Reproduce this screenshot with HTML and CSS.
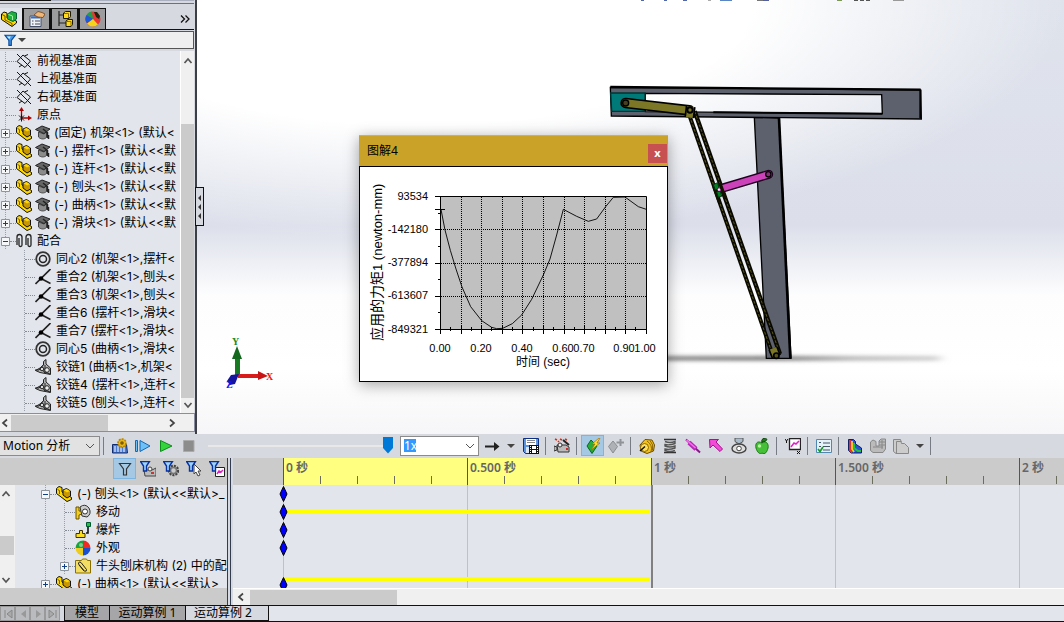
FILE: index.html
```html
<!DOCTYPE html>
<html lang="zh-CN">
<head>
<meta charset="utf-8">
<title>运动算例</title>
<link rel="stylesheet" href="styles.css">
</head>
<body>
<svg class="defs" aria-hidden="true">
  <symbol id="plane" viewBox="0 0 16 16"><path d="M1 8.500 7 2l7.500 6L9 14.500zM1 1l14 14M12 1.500 8.500 3M3 14l3-2" fill="none" stroke="#111" stroke-width="1"/></symbol>
  <symbol id="origin" viewBox="0 0 16 16"><path d="M5.500 11V2m0 9h8" stroke="#b00000" stroke-width="1.300" fill="none"/><path d="M5.500 0 3 4h5zM16 11l-4-2.500v5z" fill="#b00000"/><path d="m3 8.500 5 5m0-5-5 5m2.500-6v7" stroke="#111" stroke-width="1"/></symbol>
  <symbol id="part" viewBox="0 0 16 16"><path d="M.5 2.500 3 .500 6 1.500V6l9.500 5.500v2L11 15.500.5 7.500z" fill="#ffd800" stroke="#111"/><path d="M7 4l3.500-1.500L14.500 5v5L11 12 7 9z" fill="#c89600" stroke="#111"/><path d="m7.500 4.300 3-1.300L14 5l-3 1.500z" fill="#ffd800"/><path d="m1.500 3.500 2 1V8" fill="none" stroke="#7a5b00"/></symbol>
  <symbol id="hat" viewBox="0 0 16 16"><path d="M3.500 7v5c2 2.500 6 2.500 8 .5V7L9 9z" fill="#8b8b8b" stroke="#444"/><path d="M.5 4.500 7 1l8 3L9 8.500z" fill="#666" stroke="#222"/><path d="M8 4 12.500 7.500V13m1-3v4" stroke="#222" stroke-width="1.500" fill="none"/></symbol>
  <symbol id="clips" viewBox="0 0 16 16"><path d="M1 12V4a2.500 2.500 0 0 1 5 0v8a1.500 1.500 0 0 1-3 0V5M10 12V4a2.500 2.500 0 0 1 5 0v8a1.500 1.500 0 0 1-3 0V5" fill="none" stroke="#222" stroke-width="1.300"/></symbol>
  <symbol id="concentric" viewBox="0 0 16 16"><circle cx="8" cy="8" r="6.800" fill="none" stroke="#333" stroke-width="1.800"/><circle cx="8" cy="8" r="3.500" fill="none" stroke="#222" stroke-width="1.500"/></symbol>
  <symbol id="coincident" viewBox="0 0 16 16"><path d="M.5 15 15.500 0M6 9.500l9.500 5" stroke="#222" stroke-width="1.600"/><circle cx="6" cy="9.500" r="2.300" fill="#000"/></symbol>
  <symbol id="hinge" viewBox="0 0 16 16"><path d="M8.500 6V2.500L11 .5V5l4.500 4v6.500L5 13.500.5 11.500 5 9z" fill="#b5b5b5" stroke="#222"/><path d="M0 11h4l5-6m-3 4 4 5m0-8v7l5 2" stroke="#222" fill="none"/><circle cx="12" cy="11" r="2.300" fill="#eee" stroke="#222"/><circle cx="7" cy="10" r="1.800" fill="#ddd" stroke="#222"/></symbol>
  <symbol id="ball" viewBox="0 0 16 16"><circle cx="8" cy="8" r="7.500" fill="#eee"/><path d="M8 8V.5A7.500 7.500 0 0 0 .5 8z" fill="#18a33c"/><path d="M8 8V.5A7.500 7.500 0 0 1 15.500 8z" fill="#ee2b22"/><path d="M8 8h7.500A7.500 7.500 0 0 1 8 15.500z" fill="#1a4fd0"/><path d="M8 8v7.500A7.500 7.500 0 0 1 .5 8z" fill="#eccb22"/><circle cx="6" cy="5" r="2" fill="#fff" opacity=".45"/></symbol>
  <symbol id="assembly" viewBox="0 0 16 16"><path d="M.5 3 3 1l3 1v5l9.500 3v2L11 15.500.5 8.500z" fill="#ffd800" stroke="#111"/><path d="m1 3.500 3 1.500v4l7 3.500v2.500" fill="none" stroke="#6b5000"/><path d="m6.500 3 4-2.500 5 1.500v6L12 10.500 6.500 8z" fill="#1fae3a" stroke="#063"/><path d="m7.500 3.500 4 1.500v4" fill="none" stroke="#a5f0a8"/></symbol>
  <symbol id="props" viewBox="0 0 16 16"><path d="M1 5h11v10.500H1z" fill="#eef2f8" stroke="#44506a"/><path d="M2 5.500h9v2H2z" fill="#3670c8"/><path d="M6 10h5M6 13h5M3 10h1.500M3 13h1.500" stroke="#445"/><path d="M5 4 9 .5l4 1L16 3l-2 3.500L9 6z" fill="#f0b878" stroke="#70401c" stroke-width=".8"/></symbol>
  <symbol id="config" viewBox="0 0 16 16"><path d="M2 0v15M2 4h5M2 12h7" stroke="#222" fill="none" stroke-width="1.200"/><path d="m6.500 2 2-1.500h5v5L12 7.500H6.500zM9 10l2-1.500h4.500v5L14 15.500H9z" fill="#ffd91a" stroke="#1c1800"/><path d="M7 2.500h4.500V7M9.500 10.500H14V15" fill="none" stroke="#8a6b00"/></symbol>
  <symbol id="appearance" viewBox="0 0 16 16"><circle cx="8" cy="8" r="7.500" fill="#e33"/><path d="M8 8 1.500 4A7.500 7.500 0 0 1 7 .500z" fill="#1ca24a"/><path d="M8 8 1.500 4A7.500 7.500 0 0 0 2 12.500z" fill="#1a5adb"/><path d="M8 8 2 12.500a7.500 7.500 0 0 0 11 1z" fill="#f5d51b"/><path d="M9 1h3l3 4-1 3-3-2z" fill="#221"/></symbol>
  <symbol id="funnel" viewBox="0 0 16 16"><path d="M1 1.500h13L9 8v6H6V8z" fill="#4898e8" stroke="#0a4c9c" stroke-width="1.400"/><path d="M3.500 3h5L6.500 6z" fill="#c9ecff"/></symbol>
  <symbol id="bluefunnel" viewBox="0 0 16 16"><path d="M.5.5h9L6.500 5v5h-3V5z" fill="#9fd3ff" stroke="#0832a0" stroke-width="1.400"/></symbol>
  <symbol id="expand" viewBox="0 0 9 9"><path d="M.5.5h8v8h-8z" fill="#f6f7f9" stroke="#8d949c"/><path d="M2 4.500h5M4.500 2v5" stroke="#123f86"/></symbol>
  <symbol id="collapse" viewBox="0 0 9 9"><path d="M.5.5h8v8h-8z" fill="#f6f7f9" stroke="#8d949c"/><path d="M2 4.500h5" stroke="#123f86"/></symbol>
  <symbol id="up" viewBox="0 0 10 10"><path d="m1.500 7 3.500-4 3.500 4" fill="none" stroke="#555" stroke-width="1.700"/></symbol>
  <symbol id="down" viewBox="0 0 10 10"><path d="m1.500 3 3.500 4 3.500-4" fill="none" stroke="#555" stroke-width="1.700"/></symbol>
  <symbol id="left" viewBox="0 0 10 10"><path d="M7 1.500 3 5l4 3.500" fill="none" stroke="#444" stroke-width="1.700"/></symbol>
  <symbol id="right" viewBox="0 0 10 10"><path d="m3 1.500 4 3.500-4 3.500" fill="none" stroke="#444" stroke-width="1.700"/></symbol>
  <symbol id="chev" viewBox="0 0 10 10"><path d="m1 3 4 4 4-4" fill="none" stroke="#555" stroke-width="1"/></symbol>
  <symbol id="caret" viewBox="0 0 8 8"><path d="M0 2h8L4 6z" fill="#444"/></symbol>
</svg>

<main class="workspace">
  <aside class="sidebar">
    <div class="strip"></div>
    <div class="modes">
      <button class="mode mode-on" aria-label="设计树"><svg class="ic"><use href="#assembly"/></svg></button>
      <button class="mode" aria-label="属性"><svg class="ic"><use href="#props"/></svg></button>
      <button class="mode" aria-label="配置"><svg class="ic"><use href="#config"/></svg></button>
      <button class="mode" aria-label="外观"><svg class="ic"><use href="#appearance"/></svg></button>
      <button class="more" aria-label="更多"><svg class="ic-s" viewBox="0 0 10 10"><path d="m1 1.500 3.500 3.500L1 8.500m4.500-7L9 5 5.500 8.500" fill="none" stroke="#111" stroke-width="1.300"/></svg></button>
    </div>
    <button class="filter" aria-label="过滤"><svg class="ic-m"><use href="#funnel"/></svg><svg class="ic-t"><use href="#caret"/></svg></button>
    <div class="treebox">
      <ul class="tree">
        <li class="row lead"><i class="dots"></i><svg class="ic"><use href="#plane"/></svg><span class="name">前视基准面</span></li>
        <li class="row lead"><i class="dots"></i><svg class="ic"><use href="#plane"/></svg><span class="name">上视基准面</span></li>
        <li class="row lead"><i class="dots"></i><svg class="ic"><use href="#plane"/></svg><span class="name">右视基准面</span></li>
        <li class="row lead"><i class="dots"></i><svg class="ic"><use href="#origin"/></svg><span class="name">原点</span></li>
        <li class="row"><svg class="ex"><use href="#expand"/></svg><i class="dots"></i><svg class="ic"><use href="#part"/></svg><svg class="ic hat"><use href="#hat"/></svg><span class="name near">(固定) 机架&lt;1&gt; (默认&lt;</span></li>
        <li class="row"><svg class="ex"><use href="#expand"/></svg><i class="dots"></i><svg class="ic"><use href="#part"/></svg><svg class="ic hat"><use href="#hat"/></svg><span class="name near">(-) 摆杆&lt;1&gt; (默认&lt;&lt;默</span></li>
        <li class="row"><svg class="ex"><use href="#expand"/></svg><i class="dots"></i><svg class="ic"><use href="#part"/></svg><svg class="ic hat"><use href="#hat"/></svg><span class="name near">(-) 连杆&lt;1&gt; (默认&lt;&lt;默</span></li>
        <li class="row"><svg class="ex"><use href="#expand"/></svg><i class="dots"></i><svg class="ic"><use href="#part"/></svg><svg class="ic hat"><use href="#hat"/></svg><span class="name near">(-) 刨头&lt;1&gt; (默认&lt;&lt;默</span></li>
        <li class="row"><svg class="ex"><use href="#expand"/></svg><i class="dots"></i><svg class="ic"><use href="#part"/></svg><svg class="ic hat"><use href="#hat"/></svg><span class="name near">(-) 曲柄&lt;1&gt; (默认&lt;&lt;默</span></li>
        <li class="row"><svg class="ex"><use href="#expand"/></svg><i class="dots"></i><svg class="ic"><use href="#part"/></svg><svg class="ic hat"><use href="#hat"/></svg><span class="name near">(-) 滑块&lt;1&gt; (默认&lt;&lt;默</span></li>
        <li class="row"><svg class="ex"><use href="#collapse"/></svg><i class="dots"></i><svg class="ic"><use href="#clips"/></svg><span class="name">配合</span></li>
        <li class="row mate"><i class="dots"></i><svg class="ic"><use href="#concentric"/></svg><span class="name">同心2 (机架&lt;1&gt;,摆杆&lt;</span></li>
        <li class="row mate"><i class="dots"></i><svg class="ic"><use href="#coincident"/></svg><span class="name">重合2 (机架&lt;1&gt;,刨头&lt;</span></li>
        <li class="row mate"><i class="dots"></i><svg class="ic"><use href="#coincident"/></svg><span class="name">重合3 (机架&lt;1&gt;,刨头&lt;</span></li>
        <li class="row mate"><i class="dots"></i><svg class="ic"><use href="#coincident"/></svg><span class="name">重合6 (摆杆&lt;1&gt;,滑块&lt;</span></li>
        <li class="row mate"><i class="dots"></i><svg class="ic"><use href="#coincident"/></svg><span class="name">重合7 (摆杆&lt;1&gt;,滑块&lt;</span></li>
        <li class="row mate"><i class="dots"></i><svg class="ic"><use href="#concentric"/></svg><span class="name">同心5 (曲柄&lt;1&gt;,滑块&lt;</span></li>
        <li class="row mate"><i class="dots"></i><svg class="ic"><use href="#hinge"/></svg><span class="name">铰链1 (曲柄&lt;1&gt;,机架&lt;</span></li>
        <li class="row mate"><i class="dots"></i><svg class="ic"><use href="#hinge"/></svg><span class="name">铰链4 (摆杆&lt;1&gt;,连杆&lt;</span></li>
        <li class="row mate"><i class="dots"></i><svg class="ic"><use href="#hinge"/></svg><span class="name">铰链5 (刨头&lt;1&gt;,连杆&lt;</span></li>
      </ul>
      <div class="vscroll">
        <svg class="ic-s"><use href="#up"/></svg>
        <div class="vthumb"></div>
        <svg class="ic-s"><use href="#down"/></svg>
      </div>
    </div>
    <div class="hscroll side-h">
      <svg class="ic-s"><use href="#left"/></svg><div class="hthumb"></div><svg class="ic-s"><use href="#right"/></svg>
    </div>
  </aside>

  <section class="viewport">
    <svg class="scene" role="img" aria-label="牛头刨床机构模型">
      <defs>
        <linearGradient id="fade"><stop offset="0" stop-color="#555"/><stop offset=".45" stop-color="#444"/><stop offset=".7" stop-color="#999"/><stop offset="1" stop-color="#bbb"/></linearGradient>
        <filter id="soft" filterUnits="userSpaceOnUse" x="100" y="800" width="1000" height="130"><feGaussianBlur stdDeviation="16 6"/></filter>
      </defs>
      <g>
        <path d="M444 0h3v1h-3zM467 0h3v1h-3zM486 0h4v1h-4z" fill="#5368a8"/>
        <path d="M511 0h3v1h-3z" fill="#aaa"/><path d="M523 0h12v1h-12z" fill="#5b86c4"/>
        <path d="M560 0h6v1h-6z" fill="#777"/><path d="M566 0h6v1h-6z" fill="#56609a"/>
        <path d="M640 0h5v1h-5z" fill="#7a9a55"/><path d="M657 0h4v1h-4zM663 0h4v1h-4zM669 0h4v1h-4z" fill="#555"/><path d="M696 0h11v1h-11z" fill="#999"/>
      </g>
      <g transform="translate(403 70) scale(.33333)">
        <path d="M150 860H1020V870H150z" fill="url(#fade)" filter="url(#soft)"/>
        <path d="M463 142 537 144 573 865H499z" fill="#5d616e" stroke="#000" stroke-width="4"/>
        <path d="M537 144 571 865" stroke="#000" stroke-width="8"/>
        <path fill-rule="evenodd" d="M31 52 962 60 964 147 34 138zM136 70V125L847 131 845 74z" fill="#5d616e" stroke="#000" stroke-width="4"/>
        <path d="M31 51 962 59" stroke="#000" stroke-width="7"/><path d="M340 127 847 131M961 60v85" stroke="#000" stroke-width="6"/>
        <path d="M32 69H135V124H35z" fill="#007a78" stroke="#033" stroke-width="4"/>
        <path d="M77 99 268 121" stroke="#000" stroke-width="32" stroke-linecap="round"/>
        <path d="M77 99 268 121" stroke="#7b7726" stroke-width="22" stroke-linecap="round"/>
        <path d="M264 124 517 852" stroke="#080800" stroke-width="12"/>
        <path d="M284 124 540 852" stroke="#080800" stroke-width="13"/>
        <path d="M264 124 517 852M284 124 540 852" stroke="#57551a" stroke-width="3" stroke-dasharray="9 5"/>
        <path d="M272 110 268 143M519 835 529 860" stroke="#000" stroke-width="30"/>
        <path d="M272 110 268 143M519 835 529 860" stroke="#7b7726" stroke-width="20"/>
        <circle cx="77" cy="99" r="9" fill="#444020" stroke="#000" stroke-width="4"/>
        <circle cx="270" cy="120" r="8" fill="#7b7726" stroke="#000" stroke-width="6"/>
        <circle cx="529" cy="857" r="8" fill="#55511a" stroke="#000" stroke-width="5"/>
        <path d="M362 356 506 313" stroke="#200020" stroke-width="27" stroke-linecap="round"/>
        <path d="M362 356 506 313" stroke="#cb42b9" stroke-width="19" stroke-linecap="round"/>
        <path d="M342 350 358 396M359 338 376 385" stroke="#111100" stroke-width="10"/>
        <path d="M340 344 353 338 357 355 346 360zM350 366 361 363 365 379 355 382z" fill="#008020" stroke="#031" stroke-width="3"/>
        <circle cx="505" cy="313" r="8" fill="#84317a" stroke="#000" stroke-width="4"/>
        <circle cx="357" cy="359" r="4" fill="#fff" stroke="#a0a"/>
      </g>
      <g>
        <path d="M38 376V355h5v21z" fill="#177a22"/><path d="M40 346 35 359h10z" fill="#13681d"/><path d="M41 374h22v4H41z" fill="#d81c1c"/><path d="m71 376-10-5v9z" fill="#c81414"/><path d="m30 381 4-6 8-1-4 10-5 1z" fill="#1414a0"/>
        <text class="axis" x="35" y="345" fill="#1a8a1a">Y</text><text class="axis" x="69" y="380" fill="#f01010">X</text><text class="axis" x="29" y="388" fill="#1212ff">Z</text>
      </g>
    </svg>
    <button class="handle" aria-label="折叠面板"><svg class="arrows" viewBox="0 0 5 24"><path d="M4 0v6L1 3zM4 9v6L1 12zM4 18v6L1 21z" fill="#333"/></svg></button>
    <section class="dialog" aria-label="图解4">
      <header class="dialog-head"><h2 class="dialog-title">图解4</h2><button class="close" aria-label="关闭">x</button></header>
      <svg class="chart" viewBox="0 0 307 214">
        <path d="M80.500 29.500h206v133h-206z" fill="#c0c0c0" stroke="#000"/>
        <path d="M101.500 30v132M121.500 30v132M142.500 30v132M162.500 30v132M183.500 30v132M204.500 30v132M224.500 30v132M245.500 30v132M265.500 30v132M81 62.500h205M81 96.500h205M81 129.500h205" stroke="#000" stroke-dasharray="1 1" fill="none"/>
        <path d="M75 29.500h6M75 42.500h10M75 62.500h6M75 96.500h6M75 129.500h6M75 162.500h6M78 46.500h3M78 79.500h3M78 112.500h3M78 145.500h3M80.500 163v4M101.500 159v8M121.500 159v8M142.500 159v8M162.500 159v8M183.500 159v8M204.500 159v8M224.500 159v8M245.500 159v8M265.500 159v8M286.500 159v8M90.500 160v4M111.500 160v4M131.500 160v4M152.500 160v4M173.500 160v4M193.500 160v4M214.500 160v4M235.500 160v4M255.500 160v4M275.500 160v4" stroke="#000"/>
        <g transform="translate(-10 -42) scale(.33333)"><path d="M273 253 285 315 301 376 318 432 336 486 362 545 395 587 425 607 440 611 458 610 487 596 515 570 545 523 580 450 600 402 620 330 640 253 680 274 715 289 740 282 767 245 790 217 825 216 865 245 889 253" fill="none" stroke="#000" stroke-width="2.700"/></g>
        <g class="num end"><text x="68" y="33">93534</text><text x="68" y="66">-142180</text><text x="68" y="99">-377894</text><text x="68" y="132">-613607</text><text x="68" y="166">-849321</text></g>
        <g class="num mid"><text x="80" y="185">0.00</text><text x="121" y="185">0.20</text><text x="162" y="185">0.40</text><text x="203" y="185">0.60</text><text x="224" y="185">0.70</text><text x="264" y="185">0.90</text><text x="285" y="185">1.00</text></g>
        <text class="xlabel mid" x="183" y="199">时间 (sec)</text>
        <text class="ylabel" transform="translate(22 174) rotate(-90)"><tspan class="big">应用的力矩</tspan>1 (newton-mm)</text>
      </svg>
    </section>
  </section>
</main>

<section class="motion">
  <div class="toolbar">
    <label class="combo study"><select class="pick" aria-label="算例类型"><option>Motion 分析</option></select><svg class="ic-c"><use href="#chev"/></svg></label>
    <i class="sep"></i>
    <button class="tool" aria-label="计算"><svg class="ic" viewBox="0 0 16 16"><path d="M.5 6.500h14l1 8.500H.5z" fill="#4a7ad0" stroke="#102c70"/><path d="M2 9h11M2 11h11M2 13h11" stroke="#fff" stroke-dasharray="2 1"/><circle cx="10" cy="5" r="4" fill="#e8b818" stroke="#b88400" stroke-width="1.600" stroke-dasharray="2 1"/><circle cx="10" cy="5" r="1.800" fill="#7c5a00"/></svg></button>
    <button class="tool" aria-label="从头播放"><svg class="ic" viewBox="0 0 16 16"><path d="M.5 2.500h2v11h-2zM5 2.500v11L15 8z" fill="#6ec0f5" stroke="#1268b8"/></svg></button>
    <button class="tool" aria-label="播放"><svg class="ic" viewBox="0 0 16 16"><path d="M2.500 2.500v11L14 8z" fill="#34d43c" stroke="#0c8c18"/></svg></button>
    <button class="tool" aria-label="停止"><svg class="ic" viewBox="0 0 16 16"><path d="M2.500 2.500h10.500v11H2.500z" fill="#8c8c8c" stroke="#aaa"/></svg></button>
    <input class="time" type="range" min="0" max="100" value="100" aria-label="时间">
    <div class="combo speed"><input class="rate" value="1x" aria-label="播放速度"><svg class="ic-c"><use href="#chev"/></svg></div>
    <button class="tool" aria-label="播放模式"><svg class="ic" viewBox="0 0 16 16"><path d="M1 7.500h9V4l5.500 4.500L10 13V9.500H1z" fill="#222"/></svg></button>
    <button class="tool tool-n" aria-label="播放模式菜单"><svg class="ic-t"><use href="#caret"/></svg></button>
    <button class="tool save" aria-label="保存动画"><svg class="ic" viewBox="0 0 16 16"><path d="M.5.5h15v15h-13l-2-2z" fill="#5c94e0" stroke="#0c2f80"/><path d="M3 1h10v6H3z" fill="#fff"/><path d="M4 2.500h8M4 4.500h8" stroke="#888"/><path d="M3 9h4v6H3z" fill="#dde6f5"/><path d="M6 7h10v9H6z" fill="#111"/><path d="M9 8h4v3H9zM9 12h4v3H9z" fill="#fff"/><path d="M7.500 8v8M14.500 8v8" stroke="#fff" stroke-dasharray="1 1"/></svg></button>
    <i class="sep"></i>
    <button class="tool" aria-label="动画向导"><svg class="ic" viewBox="0 0 16 16"><path d="m1 1 2 1M6 1l2 1m3-1 2 1M4 3l1 1" stroke="#e02a10" stroke-width="1.600"/><path d="m9 2 6 5" stroke="#222" stroke-width="2"/><path d="M3 7h9l3 2v5H4zM0 8l3 1v3l-3 1z" fill="#bbb" stroke="#333"/><circle cx="6" cy="7" r="2" fill="#eee" stroke="#333"/><path d="M12 10h2v2h-2z" fill="#d22"/></svg></button>
    <i class="sep"></i>
    <button class="tool tool-on" aria-label="自动键码" aria-pressed="true"><svg class="ic" viewBox="0 0 16 16"><path d="m6 2 6 6-5 7.500L2 8z" fill="#26ae3a" stroke="#0a6418"/><path d="M14 0 7 6h3L6 12l9-7h-3l3-5z" fill="#ffe02a" stroke="#a86a00" stroke-width=".7"/></svg></button>
    <button class="tool" aria-label="添加键码"><svg class="ic" viewBox="0 0 16 16"><path d="m5 3 4.500 5.500L5 15 .5 8.500z" fill="#aeb1b5" stroke="#8a8d92"/><path d="M8.500 4.500H16M12.500 1v7" stroke="#909398" stroke-width="2"/></svg></button>
    <i class="sep"></i>
    <button class="tool" aria-label="马达"><svg class="ic" viewBox="0 0 16 16"><path d="M1 7 6 1.500l7 .5 2.500 5-1 6L8 15.500 2 13z" fill="#f5c21c" stroke="#6a4c00"/><path d="M8 3q6 4 4 11M11 2.500q4 4 2.500 10" stroke="#8c6500" fill="none"/><circle cx="5.500" cy="9.500" r="4" fill="#ffdf5a" stroke="#8a6600"/><path d="m1 13 5-4.500" stroke="#111" stroke-width="1.500"/></svg></button>
    <button class="tool" aria-label="弹簧"><svg class="ic" viewBox="0 0 16 16"><path d="M2 1.500h12M2 14.500h12" stroke="#333" stroke-width="1.500"/><path d="M3 3.500q5 2 10 0v2q-5 2-10 1v1.500q5 2 10 0v2q-5 2-10 1v1.500q5 2 10 0" fill="none" stroke="#555" stroke-width="1.400"/></svg></button>
    <button class="tool" aria-label="阻尼"><svg class="ic" viewBox="0 0 16 16"><path d="m1 1.500 14 13" stroke="#8b178b" stroke-width="2"/><path d="m4 4.500 7 6.500" stroke="#b32bb3" stroke-width="4.500"/><path d="m1.500 2 9 8" stroke="#f76df0" stroke-width="1.600"/></svg></button>
    <button class="tool" aria-label="力"><svg class="ic" viewBox="0 0 16 16"><path d="M1.500 1.500h9L8 4l6.500 7-2.500 2.500L5 7 2 10z" fill="#f34ad8" stroke="#a0148c"/></svg></button>
    <button class="tool" aria-label="接触"><svg class="ic" viewBox="0 0 16 16"><path d="M4 0h8v3.500L8 6 4 3.500z" fill="#abc" stroke="#555"/><ellipse cx="8" cy="10.500" rx="7" ry="4.500" fill="#ddd" stroke="#444" stroke-width="1.400"/><circle cx="8" cy="10.500" r="2.300" fill="#fff" stroke="#444"/></svg></button>
    <button class="tool" aria-label="引力"><svg class="ic" viewBox="0 0 16 16"><path d="M8 5C3 2 1 6 2 10s4 7 6 5c3 2 5-1 6-5s-2-8-6-5z" fill="#46c038" stroke="#1c7a18"/><path d="M8 5Q7 2 9 .5q3-1 4 1Q12 4 8 4" fill="#227a1c" stroke="#124a10"/><circle cx="5.500" cy="8" r="1.700" fill="#baf5a4"/></svg></button>
    <i class="sep"></i>
    <button class="tool" aria-label="结果和图解"><svg class="ic" viewBox="0 0 16 16"><path d="M4.500.5h11v11h-11z" fill="#fff" stroke="#222" stroke-width="1.300"/><path d="m6 9 3-4 2 1 3-3" stroke="#e020c8" stroke-width="1.500" fill="none"/><path d="m0 1 1.500 2L3 1M1.500 3v2M12 13l3 3m0-3-3 3" stroke="#111" fill="none"/></svg></button>
    <i class="sep"></i>
    <button class="tool" aria-label="属性"><svg class="ic" viewBox="0 0 16 16"><path d="M.5 1.500h15v13H.5z" fill="#e5f1f9" stroke="#5088b0"/><path d="M7 5h7M7 8.500h7M7 12h7M3 4.500h2M3 8.500h2" stroke="#456" stroke-width="1.200"/><path d="m2 11 2 2.500L7 9" stroke="#1a9c2a" stroke-width="1.800" fill="none"/></svg></button>
    <i class="sep"></i>
    <button class="tool" aria-label="模拟"><svg class="ic" viewBox="0 0 16 16"><path d="M1.500 1.500h5l2 2V6l6 4v5H4l-2.500-2.500z" fill="#2a52e0" stroke="#102060"/><path d="M3 2v10.500l2 2" stroke="#f03020" stroke-width="1.800" fill="none"/><path d="M5 3v8l2 3" stroke="#ffd21a" stroke-width="1.800" fill="none"/><path d="M7 5v5l4 3h3" stroke="#22c33a" stroke-width="2" fill="none"/></svg></button>
    <button class="tool" aria-label="网格"><svg class="ic" viewBox="0 0 16 16"><path d="M.5 4 3 2l3 1.500V8h3V3l2-2h4.500v10L13 14.500H3l-2.500-2z" fill="#bbb" stroke="#888"/><path d="M9 4h6M9 7h6M12 2v9M3 9h10" stroke="#888"/></svg></button>
    <button class="tool" aria-label="零件"><svg class="ic" viewBox="0 0 16 16"><path d="M.5 1.500h7l1 4h3l4 4v6H3l-2.500-2zM3.500 3.500v12M3.500 3.500h5" fill="#ccc" stroke="#888"/></svg></button>
    <button class="tool tool-n" aria-label="更多选项"><svg class="ic-t"><use href="#caret"/></svg></button>
    <i class="sep"></i>
  </div>

  <div class="panes">
    <div class="left">
      <div class="filters">
        <button class="tool tool-on" aria-label="无过滤"><svg class="ic" viewBox="0 0 16 16"><path d="M2.500 2.500h11L9.500 8v6h-3V8z" fill="none" stroke="#333" stroke-width="1.200"/></svg></button>
        <button class="tool" aria-label="过滤动画"><svg class="ic" viewBox="0 0 16 16"><path d="M4 9h8l4-2v8H5z" fill="#bbb" stroke="#444"/><circle cx="10" cy="8" r="2" fill="#eee" stroke="#444"/><path d="M11 11h3v2h-3z" fill="#c33"/><use href="#bluefunnel"/></svg></button>
        <button class="tool" aria-label="过滤驱动"><svg class="ic" viewBox="0 0 16 16"><circle cx="10.500" cy="9.500" r="4.500" fill="none" stroke="#444" stroke-width="2.500" stroke-dasharray="2 1"/><circle cx="10.500" cy="9.500" r="3" fill="none" stroke="#777" stroke-width="1.500"/><use href="#bluefunnel"/></svg></button>
        <button class="tool" aria-label="过滤选定"><svg class="ic" viewBox="0 0 16 16"><path d="m8 3 7 7h-3l2 4-2 1-2-4-2 2z" fill="#fff" stroke="#444"/><use href="#bluefunnel"/></svg></button>
        <button class="tool" aria-label="过滤结果"><svg class="ic" viewBox="0 0 16 16"><path d="M6.500 6.500h9v9h-9z" fill="#fff" stroke="#222"/><path d="m8 13 2-3 2 1 2-2" stroke="#e020c8" stroke-width="1.500" fill="none"/><use href="#bluefunnel"/></svg></button>
      </div>
      <div class="treebox2">
        <div class="vscroll2"><svg class="ic-s"><use href="#up"/></svg><div class="vthumb2"></div><svg class="ic-s"><use href="#down"/></svg></div>
        <ul class="tree tree2">
          <li class="row"><svg class="ex"><use href="#collapse"/></svg><i class="dots"></i><svg class="ic"><use href="#part"/></svg><span class="name">(-) 刨头&lt;1&gt; (默认&lt;&lt;默认&gt;_</span></li>
          <li class="row sub"><i class="dots"></i><svg class="ic" viewBox="0 0 16 16"><path d="M1 3h3v4h3v3l-3 1v4H1z" fill="#f4cf1a" stroke="#6a5200"/><path d="M5 3q5-4 9 1 3 6-2 9l-5-1z" fill="#ccc" stroke="#333"/><circle cx="10" cy="7.500" r="2.500" fill="#fff" stroke="#333"/></svg><span class="name">移动</span></li>
          <li class="row sub"><i class="dots"></i><svg class="ic" viewBox="0 0 16 16"><path d="M1 11.500h3.500v-3h3v3h2.500v4H1z" fill="#f8dc20" stroke="#3c3000"/><path d="M11 11h2V4" stroke="#111" fill="none" stroke-width="1.600"/><path d="M11.500.5h4v4h-4z" fill="#1cc82c" stroke="#053"/></svg><span class="name">爆炸</span></li>
          <li class="row sub"><i class="dots"></i><svg class="ic"><use href="#ball"/></svg><span class="name">外观</span></li>
          <li class="row sub"><svg class="ex"><use href="#expand"/></svg><i class="dots"></i><svg class="ic" viewBox="0 0 16 16"><path d="M.5 2.500h6l1-1.500h4l1 1.500h3v12.500H.5z" fill="#f3de63" stroke="#8a7000"/><path d="m4 7 5 6q3 1 2.500-1.500L6 4.500Q3.500 3 3.500 6L8.500 12" stroke="#222" fill="none"/></svg><span class="name">牛头刨床机构 (2) 中的配</span></li>
          <li class="row"><svg class="ex"><use href="#expand"/></svg><i class="dots"></i><svg class="ic"><use href="#part"/></svg><span class="name">(-) 曲柄&lt;1&gt; (默认&lt;&lt;默认&gt;</span></li>
        </ul>
      </div>
      <div class="leftfoot"></div>
    </div>
    <div class="gantt">
      <div class="ruler">
        <div class="lead-in"></div>
        <div class="span hot">0 秒</div><div class="span hot">0.500 秒</div><div class="span">1 秒</div><div class="span">1.500 秒</div><div class="span">2 秒</div>
      </div>
      <div class="tracks">
        <div class="grid"><div class="lead-in2"></div><div class="cell"></div><div class="cell"></div><div class="cell end-line"></div><div class="cell"></div><div class="cell"></div></div>
        <div class="lane"><svg class="key" viewBox="0 0 9 16"><path d="M4.500.5 8 8l-3.500 7.500L1 8z" fill="#00f" stroke="#000"/></svg></div>
        <div class="lane"><div class="bar"></div><svg class="key" viewBox="0 0 9 16"><path d="M4.500.5 8 8l-3.500 7.500L1 8z" fill="#00f" stroke="#000"/></svg></div>
        <div class="lane"><svg class="key" viewBox="0 0 9 16"><path d="M4.500.5 8 8l-3.500 7.500L1 8z" fill="#00f" stroke="#000"/></svg></div>
        <div class="lane"><svg class="key" viewBox="0 0 9 16"><path d="M4.500.5 8 8l-3.500 7.500L1 8z" fill="#00f" stroke="#000"/></svg></div>
        <div class="lane"></div>
        <div class="lane lane-cut"><div class="bar"></div><svg class="key" viewBox="0 0 9 16"><path d="M4.500.5 8 8l-3.500 7.500L1 8z" fill="#00f" stroke="#000"/></svg></div>
      </div>
      <div class="hscroll gantt-h"><svg class="ic-s"><use href="#left"/></svg><div class="hthumb wide"></div></div>
    </div>
  </div>

  <nav class="tabs">
    <button class="nav" aria-label="第一个"><svg class="ic-s" viewBox="0 0 10 10"><path d="M2 1v8M9 1v8L4 5z" stroke="#888" fill="#aaa"/></svg></button>
    <button class="nav" aria-label="上一个"><svg class="ic-s" viewBox="0 0 10 10"><path d="M8 1v8L3 5z" fill="#999"/></svg></button>
    <button class="nav" aria-label="下一个"><svg class="ic-s" viewBox="0 0 10 10"><path d="M3 1v8l5-4z" fill="#999"/></svg></button>
    <button class="nav" aria-label="最后一个"><svg class="ic-s" viewBox="0 0 10 10"><path d="M8 1v8M1 1v8l5-4z" stroke="#888" fill="#aaa"/></svg></button>
    <button class="tab tab-a">模型</button><button class="tab tab-b">运动算例 1</button><button class="tab tab-c">运动算例 2</button>
    <div class="rest"></div>
  </nav>
</section>
</body>
</html>
```
FILE: styles.css
```css
* { box-sizing: border-box; }
body {
  margin: 0;
  height: 100vh;
  display: flex;
  flex-direction: column;
  overflow: hidden;
  background: #d6d9df;
  color: #000;
  font: 12px/18px "Noto Sans", "Noto Sans CJK SC", sans-serif;
}
button, input, select { font: inherit; color: inherit; margin: 0; padding: 0; border: 0; background: none; border-radius: 0; }
ul { list-style: none; margin: 0; padding: 0; }
svg { display: block; flex: none; }
.defs { position: absolute; width: 0; height: 0; }
.ic { width: 16px; height: 16px; }
.ic-m { width: 13px; height: 13px; }
.ic-s { width: 10px; height: 10px; }
.ic-c { width: 10px; height: 10px; }
.ic-t { width: 8px; height: 8px; }
.ex { width: 9px; height: 9px; }

.workspace { flex: 1; min-height: 0; display: flex; }

/* feature tree */
.sidebar {
  width: 197px;
  flex: none;
  display: flex;
  flex-direction: column;
  background: #d6d9df;
  border-right: 2px solid #3d3f46;
  padding-right: 1px;
}
.strip { height: 8px; background: linear-gradient(90deg, #111 51px, #aab0c0 51px) 0 0 / 100% 1px no-repeat, linear-gradient(#d6d9df 3px, #67708e 3px, #67708e 4px, #d6d9df 4px); }
.modes { height: 22px; display: flex; border-bottom: 1px solid #111; }
.mode { width: 28px; display: grid; place-items: center; background: #9c9c9e; border: 1px solid #111; border-left-width: 2px; border-bottom: 0; }
.mode-on { width: 22px; height: 22px; background: #e2e5eb; border: 0; justify-items: start; padding-left: 1px; }
.more { margin-left: auto; padding-right: 4px; display: grid; place-items: center; }
.filter { height: 18px; margin: 1px 0 2px; padding: 0 4px; display: flex; align-items: center; gap: 1px; background: #efefef; border: 1px solid #555; border-left: 0; }
.treebox { flex: 1; min-height: 0; display: flex; border-bottom: 1px solid #1683f5; background: #e2e5eb; }
.tree { flex: 1; min-width: 0; overflow: hidden; padding-top: 1px; background: #e2e5eb; font-family: Inter, "Noto Sans CJK SC", sans-serif; }
.row { height: 18px; display: flex; align-items: center; white-space: nowrap; padding-left: 1px; background: linear-gradient(#9aa0a8 50%, transparent 50%) 5px 0 / 1px 2px repeat-y; }
.dots { flex: none; width: 6px; border-top: 1px dotted #858b94; }
.lead { padding-left: 6px; }
.lead .dots { width: 10px; }
.hat { margin-left: 3px; }
.name { margin-left: 5px; }
.near { margin-left: 3px; }
.mate { padding-left: 25px; background-position-x: 24px; }
.mate .dots { width: 10px; }
.vscroll { width: 14px; flex: none; display: flex; flex-direction: column; align-items: center; padding: 5px 0 3px; background: #f0f0f0; border-left: 1px solid #fff; }
.vthumb { width: 13px; flex: 1; margin: 58px 0 2px; background: #cbcbcb; }
.hscroll { display: flex; align-items: center; background: #f0f0f0; }
.side-h { height: 17px; margin-bottom: 3px; padding-right: 17px; outline: 1px solid #888ea0; }
.hthumb { width: 97px; height: 16px; margin: 0 auto 0 1px; background: #cbcbcb; }

/* graphics area */
.viewport {
  flex: 1;
  min-width: 0;
  position: relative;
  background:
    radial-gradient(ellipse 650px 240px at 220px 0, #fff 52%, rgba(255,255,255,0) 100%),
    linear-gradient(#dfe3ec 0, #dcdfea 225px, #fdfdfe 295px, #fff 370px, #f6f6f8 434px);
}
.scene { width: 100%; height: 100%; }
.axis { font: 700 10px "Liberation Serif", serif; }
.handle { position: absolute; left: -2px; top: 187px; width: 9px; height: 39px; border: 1px solid #111; background: #d6d9df; display: grid; place-items: center; }
.arrows { width: 5px; height: 24px; }
.dialog { position: absolute; left: 162px; top: 135px; width: 309px; box-shadow: 0 3px 14px rgba(0,0,0,.35); }
.dialog-head { height: 31px; display: flex; align-items: center; padding: 0 1px 0 8px; background: #c9a227; border-top: 1px solid #dda85c; }
.dialog-title { flex: 1; margin: 0; font: inherit; }
.close { width: 19px; height: 19px; margin-top: 4px; background: #c75050; color: #fff; font: 700 11px/18px "Noto Sans", sans-serif; }
.chart { width: 100%; background: #fff; border: 1px solid #000; }
.num { font: 11px "Liberation Sans", sans-serif; }
.end { text-anchor: end; }
.mid { text-anchor: middle; }
.xlabel { font: 12px "Liberation Sans", "Noto Sans CJK SC", sans-serif; }
.ylabel { font: 13px "Liberation Sans", "Noto Sans CJK SC", sans-serif; }
.big { font-size: 14px; }

/* motion study */
.toolbar { height: 24px; display: flex; align-items: center; padding-bottom: 1px; background: #d6d9df; }
.combo { display: flex; align-items: center; height: 20px; border: 1px solid #8b8b8b; }
.study { width: 100px; padding-right: 4px; border-left: 0; background: #e2e2e2; }
.pick { flex: 1; min-width: 0; appearance: none; padding-left: 3px; }
.sep { width: 1px; height: 18px; margin: 0 4px 0 3px; background: #777b83; }
.tool { width: 23px; height: 21px; flex: none; display: grid; place-items: center; }
.tool-n { width: 15px; }
.tool-on { background: #a5c8e4; border: 1px solid #7cb4e2; }
.save { margin-left: 1px; }
.time { appearance: none; width: 185px; height: 18px; margin: 0 7px 0 8px; }
.time::-webkit-slider-runnable-track { height: 2px; background: #e8e8e8; }
.time::-webkit-slider-thumb { appearance: none; width: 10px; height: 17px; margin-top: -8px; background: #0078d7; clip-path: polygon(0 0, 100% 0, 100% 68%, 50% 100%, 0 68%); }
.speed { width: 79px; margin-right: 1px; padding: 0 3px; background: #fff; justify-content: space-between; }
.rate { width: 12px; height: 13px; line-height: 13px; background: #3399ff; color: #fff; }

.panes { height: 147px; display: flex; }
.left { width: 231px; flex: none; display: flex; flex-direction: column; border-right: 1px solid #343c50; padding-right: 1px; background: #d6d9df; box-shadow: inset -2px 0 #d6d9df, inset -3px 0 #343c50; }
.filters { height: 27px; margin-right: 2px; padding-left: 113px; display: flex; align-items: flex-start; background: #cbcbcb; }
.treebox2 { flex: 1; min-height: 0; display: flex; margin-right: 2px; overflow: hidden; background: #e2e5eb; }
.vscroll2 { width: 15px; flex: none; display: flex; flex-direction: column; align-items: flex-start; justify-content: space-between; padding: 4px 0 3px 1px; background: #f0f0f0; }
.vthumb2 { width: 14px; height: 19px; margin: 16px 0 0 -1px; background: #cbcbcb; }
.tree2 { padding-top: 0; }
.tree2 .row { padding-left: 26px; background-position-x: 30px; }
.tree2 .sub { padding-left: 50px; background-image: linear-gradient(#9aa0a8 50%, transparent 50%), linear-gradient(#9aa0a8 50%, transparent 50%); background-size: 1px 2px; background-repeat: repeat-y; background-position: 30px 0, 49px 0; }
.tree2 .sub .dots { width: 10px; }
.tree2 .sub .ex { margin-left: -5px; }
.tree2 .sub .ex + .dots { width: 6px; }
.leftfoot { height: 17px; margin-right: 2px; background: #cbcbcb; }

.gantt { flex: 1; min-width: 0; margin-left: 2px; display: flex; flex-direction: column; }
.ruler { height: 27px; display: flex; overflow: hidden; background: #cbcbcb; }
.lead-in, .lead-in2 { width: 50px; flex: none; }
.span {
  width: 184px;
  flex: none;
  padding-left: 2px;
  border-left: 1px solid #555;
  color: #666;
  font-weight: 600;
  line-height: 20px;
  background: repeating-linear-gradient(90deg, transparent 0 36px, #6d6d5d 36px 37px) 0 18px / 183px 8px no-repeat;
}
.hot { background-color: #ffff80; }
.tracks { flex: 1; min-height: 0; position: relative; overflow: hidden; background: #e2e5eb; }
.grid { position: absolute; inset: 0; display: flex; }
.cell { width: 184px; flex: none; border-left: 1px solid #bfc1c4; }
.end-line { border-left: 2px solid #808080; }
.lane { height: 18px; position: relative; display: flex; align-items: center; padding-left: 46px; }
.lane-cut { padding-top: 2px; }
.key { width: 9px; height: 16px; z-index: 1; }
.bar { position: absolute; left: 50px; top: 7px; width: 367px; height: 4px; background: #ff0; }
.lane-cut .bar { top: 2px; }
.gantt-h { height: 17px; padding-left: 3px; border-top: 1px solid #fff; }
.wide { width: 147px; height: 15px; margin-left: 4px; }

.tabs { height: 17px; display: flex; border-top: 1px solid #111; border-bottom: 1px solid #111; background: #d6d9df; }
.nav { width: 15px; display: grid; place-items: center; background: #b9bbbe; border: 1px solid #999; }
.tab { line-height: 14px; background: #a6a6a8; border: 1px solid #111; border-top: 0; border-left-width: 0; }
.tab-a { width: 46px; margin-left: 4px; border-left-width: 1px; }
.tab-b { width: 76px; }
.tab-c { width: 83px; background: #d6d9df; padding-right: 8px; }
.rest { flex: 1; background: #e2e5eb; }
```
